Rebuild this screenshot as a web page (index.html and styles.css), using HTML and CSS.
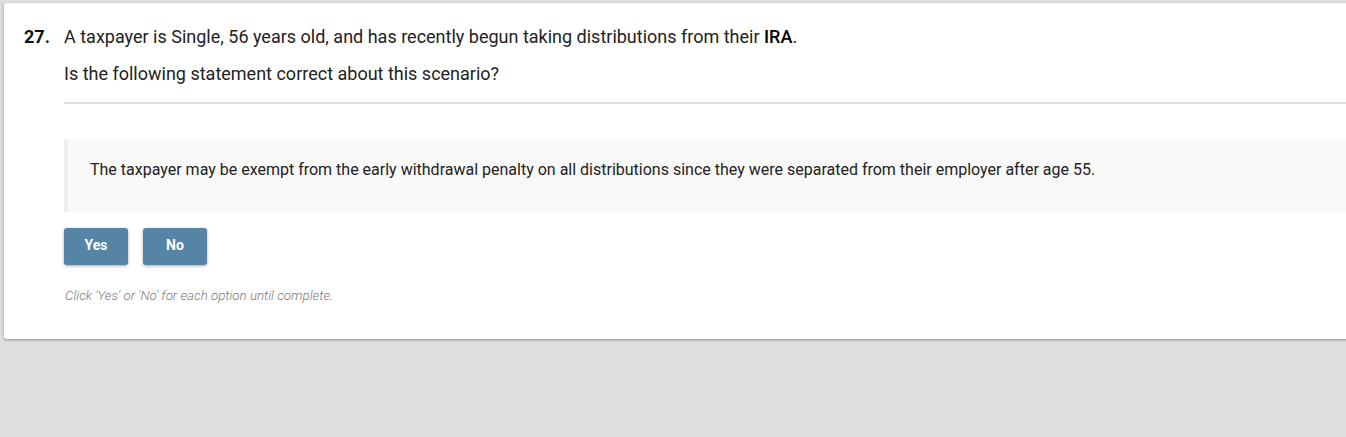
FILE: index.html
```
<!DOCTYPE html>
<html>
<head>
<meta charset="utf-8">
<link rel="stylesheet" href="styles.css">
</head>
<body>
<div class="page">
  <div class="card">
    <div class="num">27.</div>
    <div class="content">
      <p class="q">A taxpayer is Single, 56 years old, and has recently begun taking distributions from their <strong>IRA</strong>.</p>
      <p class="q q2">Is the following statement correct about this scenario?</p>
      <hr class="rule">
      <div class="statement">The taxpayer may be exempt from the early withdrawal penalty on all distributions since they were separated from their employer after age 55.</div>
      <div class="buttons">
        <button class="btn">Yes</button>
        <button class="btn">No</button>
      </div>
      <p class="hint">Click 'Yes' or 'No' for each option until complete.</p>
    </div>
  </div>
</div>
</body>
</html>
```
FILE: styles.css
```
html, body {
  margin: 0;
  padding: 0;
}
body {
  background: #dedede;
  font-family: Roboto, "Liberation Sans", sans-serif;
  color: #222;
  overflow: hidden;
  width: 1346px;
  height: 437px;
}
.page {
  padding: 3px 0 0 4px;
}
.card {
  display: flex;
  background: #fff;
  border-radius: 3px 0 0 3px;
  box-shadow: 0 1px 3px rgba(0,0,0,0.35);
  margin-right: -20px;
  padding: 22px 0 0 20px;
  box-sizing: border-box;
  height: 336px;
}
.num {
  width: 40px;
  font-weight: 700;
  font-size: 18px;
  line-height: 24px;
  color: #111;
}
.content {
  flex: 1;
}
.q {
  margin: 0;
  font-size: 18px;
  line-height: 24px;
  color: #222;
}
.q strong {
  font-weight: 500;
  color: #000;
}
.q2 {
  margin-top: 13px;
}
.rule {
  border: 0;
  height: 2px;
  background: #e0e0e0;
  margin: 16px 0 0 0;
}
.statement {
  margin-top: 35px;
  background: #f9f9f9;
  border-left: 4px solid #eeeeee;
  padding: 16px 22px 28px;
  font-size: 16px;
  line-height: 29px;
  color: #222;
}
.buttons {
  display: flex;
  gap: 15px;
  margin-top: 16px;
}
.btn {
  width: 64px;
  height: 37px;
  border: 0;
  border-radius: 3px;
  background: #5584a7;
  color: #fff;
  font-family: Roboto, "Liberation Sans", sans-serif;
  font-weight: 700;
  font-size: 14px;
  box-shadow: 0 1px 3px rgba(0,0,0,0.35);
  padding: 0 0 3px 0;
}
.hint {
  margin: 23px 0 0 1px;
  font-size: 13.3px;
  line-height: 16px;
  font-style: italic;
  font-weight: 300;
  color: #7a7a7a;
}
```
